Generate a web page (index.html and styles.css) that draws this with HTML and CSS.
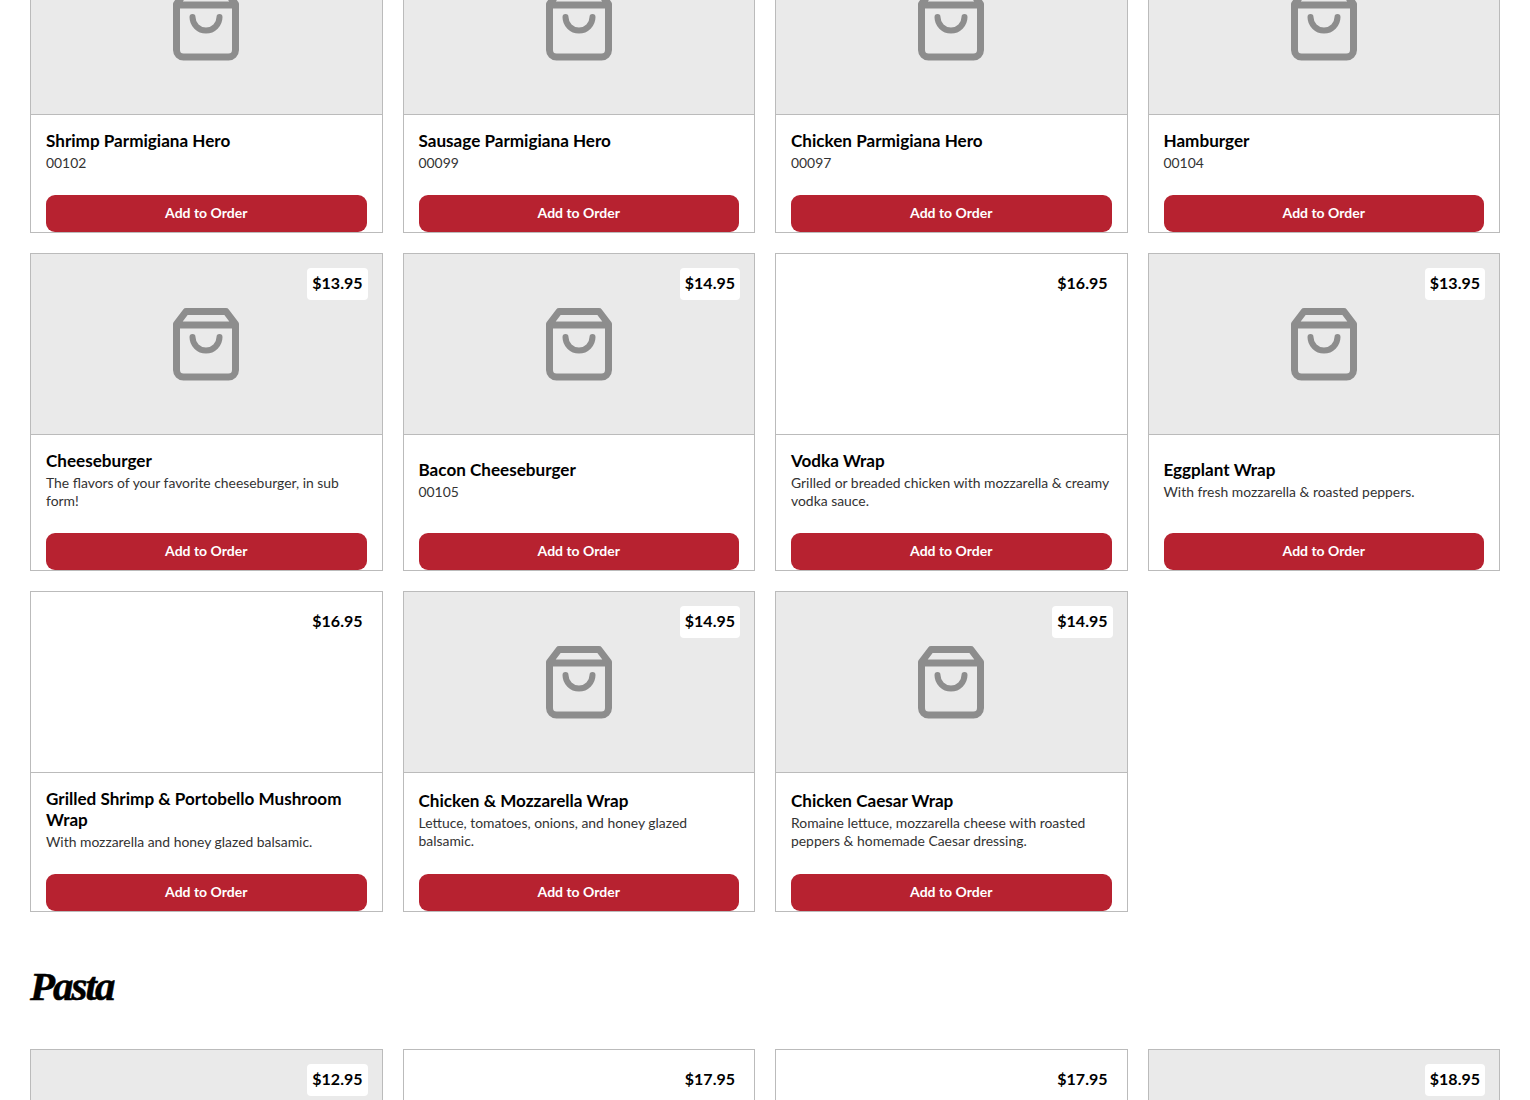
FILE: index.html
```html
<!DOCTYPE html>
<html lang="en">
<head>
<meta charset="utf-8">
<title>Menu</title>
<link rel="stylesheet" href="styles.css">
</head>
<body>
<svg class="defs" width="0" height="0" aria-hidden="true">
  <symbol id="bag" viewBox="0 0 66 73">
    <path d="M13 3.5H53L62.5 16V62a7 7 0 0 1-7 7H10.5a7 7 0 0 1-7-7V16ZM3.5 17H62.5" fill="none" stroke="currentColor" stroke-width="7" stroke-linejoin="round"/>
    <path d="M19.5 29a13.5 13.5 0 0 0 27 0" fill="none" stroke="currentColor" stroke-width="6" stroke-linecap="round"/>
  </symbol>
</svg>
<main class="page">
  <section class="grid grid-first">
    <article class="card">
      <div class="image"><svg class="bag"><use href="#bag"/></svg></div>
      <div class="body"><div class="text"><h3>Shrimp Parmigiana Hero</h3><p>00102</p></div><button class="add">Add to Order</button></div>
    </article>
    <article class="card">
      <div class="image"><svg class="bag"><use href="#bag"/></svg></div>
      <div class="body"><div class="text"><h3>Sausage Parmigiana Hero</h3><p>00099</p></div><button class="add">Add to Order</button></div>
    </article>
    <article class="card">
      <div class="image"><svg class="bag"><use href="#bag"/></svg></div>
      <div class="body"><div class="text"><h3>Chicken Parmigiana Hero</h3><p>00097</p></div><button class="add">Add to Order</button></div>
    </article>
    <article class="card">
      <div class="image"><svg class="bag"><use href="#bag"/></svg></div>
      <div class="body"><div class="text"><h3>Hamburger</h3><p>00104</p></div><button class="add">Add to Order</button></div>
    </article>
    <article class="card">
      <div class="image"><span class="price">$13.95</span><svg class="bag"><use href="#bag"/></svg></div>
      <div class="body"><div class="text"><h3>Cheeseburger</h3><p>The flavors of your favorite cheeseburger, in sub form!</p></div><button class="add">Add to Order</button></div>
    </article>
    <article class="card">
      <div class="image"><span class="price">$14.95</span><svg class="bag"><use href="#bag"/></svg></div>
      <div class="body"><div class="text"><h3>Bacon Cheeseburger</h3><p>00105</p></div><button class="add">Add to Order</button></div>
    </article>
    <article class="card">
      <div class="image image-blank"><span class="price">$16.95</span></div>
      <div class="body"><div class="text"><h3>Vodka Wrap</h3><p>Grilled or breaded chicken with mozzarella &amp; creamy vodka sauce.</p></div><button class="add">Add to Order</button></div>
    </article>
    <article class="card">
      <div class="image"><span class="price">$13.95</span><svg class="bag"><use href="#bag"/></svg></div>
      <div class="body"><div class="text"><h3>Eggplant Wrap</h3><p>With fresh mozzarella &amp; roasted peppers.</p></div><button class="add">Add to Order</button></div>
    </article>
    <article class="card">
      <div class="image image-blank"><span class="price">$16.95</span></div>
      <div class="body"><div class="text"><h3>Grilled Shrimp &amp; Portobello Mushroom Wrap</h3><p>With mozzarella and honey glazed balsamic.</p></div><button class="add">Add to Order</button></div>
    </article>
    <article class="card">
      <div class="image"><span class="price">$14.95</span><svg class="bag"><use href="#bag"/></svg></div>
      <div class="body"><div class="text"><h3>Chicken &amp; Mozzarella Wrap</h3><p>Lettuce, tomatoes, onions, and honey glazed balsamic.</p></div><button class="add">Add to Order</button></div>
    </article>
    <article class="card">
      <div class="image"><span class="price">$14.95</span><svg class="bag"><use href="#bag"/></svg></div>
      <div class="body"><div class="text"><h3>Chicken Caesar Wrap</h3><p>Romaine lettuce, mozzarella cheese with roasted peppers &amp; homemade Caesar dressing.</p></div><button class="add">Add to Order</button></div>
    </article>
  </section>
  <h2 class="section-title">Pasta</h2>
  <section class="grid">
    <article class="card"><div class="image"><span class="price">$12.95</span><svg class="bag"><use href="#bag"/></svg></div></article>
    <article class="card"><div class="image image-blank"><span class="price">$17.95</span></div></article>
    <article class="card"><div class="image image-blank"><span class="price">$17.95</span></div></article>
    <article class="card"><div class="image"><span class="price">$18.95</span><svg class="bag"><use href="#bag"/></svg></div></article>
  </section>
</main>
</body>
</html>
```
FILE: styles.css
```css
html, body {
  margin: 0;
  height: 1100px;
  overflow: hidden;
  background: #fff;
}
body {
  font-family: "Lato", "Liberation Sans", sans-serif;
  color: #000;
}
.defs {
  display: block;
  height: 0;
}
.page {
  padding: 0 30px;
}
.grid {
  display: grid;
  grid-template-columns: repeat(4, minmax(0, 1fr));
  gap: 20px;
}
.grid-first {
  margin-top: -67px;
}
.card {
  display: flex;
  flex-direction: column;
  border: 1px solid #bbb;
  min-width: 0;
}
.image {
  position: relative;
  flex: none;
  height: 180px;
  display: flex;
  align-items: center;
  justify-content: center;
  background: #eaeaea;
  border-bottom: 1px solid #bbb;
}
.image-blank {
  background: #fff;
}
.bag {
  width: 66px;
  height: 73px;
  color: #8d8d8d;
}
.price {
  position: absolute;
  top: 14px;
  right: 14px;
  padding: 0 5px;
  height: 32px;
  line-height: 30px;
  background: #fff;
  border-radius: 4px;
  font-size: 16px;
  font-weight: 700;
}
.body {
  flex: 1;
  display: flex;
  flex-direction: column;
  padding: 0 15px;
}
.text {
  flex: 1;
  display: flex;
  flex-direction: column;
  justify-content: center;
  padding: 15px 0 23px;
}
h3 {
  margin: 0;
  font-size: 17.1px;
  line-height: 21px;
  font-weight: 700;
}
p {
  margin: 3px 0 0;
  font-size: 13.9px;
  line-height: 18px;
  color: #333;
}
.add {
  display: block;
  width: 100%;
  height: 37px;
  padding: 0 0 3px;
  border: 0;
  border-radius: 9px;
  background: #b72230;
  color: #fff;
  font-family: inherit;
  font-size: 14px;
  font-weight: 700;
}
.section-title {
  margin: 0;
  height: 137px;
  padding-top: 12px;
  box-sizing: border-box;
  display: flex;
  align-items: center;
  font-family: "Liberation Serif", serif;
  font-style: italic;
  font-weight: 700;
  font-size: 41px;
  letter-spacing: -2px;
  line-height: 1;
  -webkit-text-stroke: 0.5px #000;
}
```
